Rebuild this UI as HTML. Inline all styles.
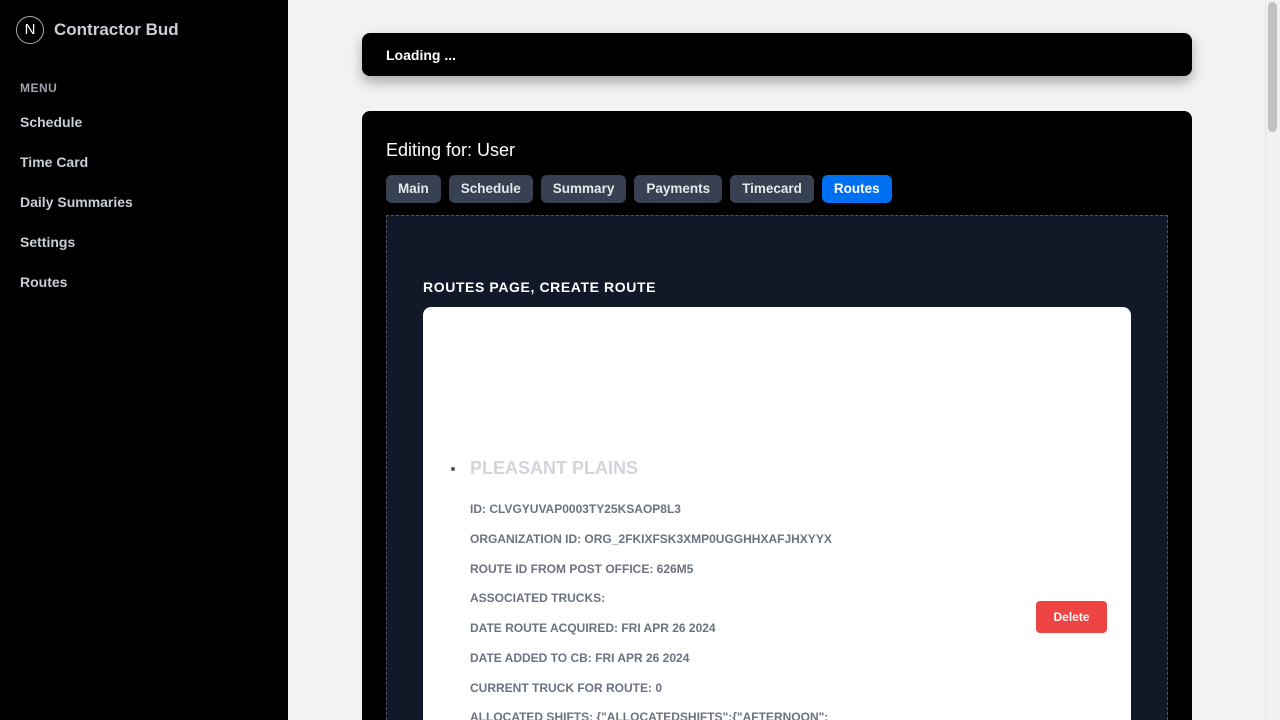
<!DOCTYPE html>
<html style="width:1280px;height:720px;overflow:hidden"><head><style>
*{margin:0;padding:0;box-sizing:border-box}
body{width:1280px;height:720px;overflow:hidden;background:#f2f2f2;font-family:"Liberation Sans","DejaVu Sans",sans-serif;position:relative}
.side{position:absolute;left:0;top:0;width:288px;height:720px;background:#000}
.logo{position:absolute;left:16px;top:16px;width:28px;height:28px;border:1px solid #aaa;border-radius:50%;color:#fff;font-size:15px;text-align:center;line-height:26px}
.brand{position:absolute;left:54px;top:20px;color:#c9cdd4;font-weight:bold;font-size:17px}
.menu{position:absolute;left:20px;top:81px;color:#9ca3af;font-weight:bold;font-size:12px;letter-spacing:.5px}
.nav{position:absolute;left:20px;color:#c9cdd4;font-weight:bold;font-size:14px}
.sb{position:absolute;right:0;top:0;width:15px;height:720px;background:#f1f1f1;border-left:1px solid #e5e5e5}
.thumb{position:absolute;right:3px;top:2px;width:9px;height:130px;background:#c1c1c1;border-radius:5px}
.load{position:absolute;left:362px;top:33px;width:830px;height:43px;background:#000;border-radius:8px;box-shadow:0 6px 12px rgba(0,0,0,.3);color:#fff;font-weight:bold;font-size:14px;padding:14px 24px}
.card{position:absolute;left:362px;top:111px;width:830px;height:609px;background:#000;border-radius:8px 8px 0 0;overflow:hidden}
.ed{position:absolute;left:24px;top:29px;color:#fff;font-size:18px}
.tabs{position:absolute;left:24px;top:64px;display:flex;gap:8px}
.tab{height:28px;padding:0 12px;background:#374151;color:#e5e7eb;font-weight:bold;font-size:13.5px;line-height:28px;border-radius:6px}
.tab.a{background:#0070f3;color:#fff}
.inner{position:absolute;left:24px;top:104px;width:782px;height:505px;background:#111827;border:1px dashed #4b5563;border-bottom:none;overflow:hidden}
.h{position:absolute;left:36px;top:63px;color:#fff;font-weight:bold;font-size:14px;letter-spacing:.6px}
.white{position:absolute;left:36px;top:91px;width:708px;height:414px;background:#fff;border-radius:8px 8px 0 0;overflow:hidden}
.dot{position:absolute;left:28px;top:160px;width:4px;height:4px;background:#555;border-radius:50%}
.t{position:absolute;left:47px;top:151px;color:#d1d5db;font-weight:bold;font-size:18px}
.it{position:absolute;left:47px;color:#6b7280;font-weight:bold;font-size:12px;white-space:nowrap}
.del{position:absolute;left:613px;top:294px;width:71px;height:32px;background:#ef4444;border-radius:4px;color:#fff;font-weight:bold;font-size:12px;text-align:center;line-height:32px}
</style></head><body>
<div class="side">
<div class="logo">N</div><div class="brand">Contractor Bud</div>
<div class="menu">MENU</div>
<div class="nav" style="top:114px">Schedule</div>
<div class="nav" style="top:154px">Time Card</div>
<div class="nav" style="top:194px">Daily Summaries</div>
<div class="nav" style="top:234px">Settings</div>
<div class="nav" style="top:274px">Routes</div>
</div>
<div class="load">Loading ...</div>
<div class="card">
<div class="ed">Editing for: User</div>
<div class="tabs"><div class="tab">Main</div><div class="tab">Schedule</div><div class="tab">Summary</div><div class="tab">Payments</div><div class="tab">Timecard</div><div class="tab a">Routes</div></div>
<div class="inner">
<div class="h">ROUTES PAGE, CREATE ROUTE</div>
<div class="white">
<div class="dot"></div>
<div class="t">PLEASANT PLAINS</div>
<div class="it" style="top:195px">ID: CLVGYUVAP0003TY25KSAOP8L3</div>
<div class="it" style="top:225px">ORGANIZATION ID: ORG_2FKIXFSK3XMP0UGGHHXAFJHXYYX</div>
<div class="it" style="top:255px">ROUTE ID FROM POST OFFICE: 626M5</div>
<div class="it" style="top:284px">ASSOCIATED TRUCKS:</div>
<div class="it" style="top:314px">DATE ROUTE ACQUIRED: FRI APR 26 2024</div>
<div class="it" style="top:344px">DATE ADDED TO CB: FRI APR 26 2024</div>
<div class="it" style="top:374px">CURRENT TRUCK FOR ROUTE: 0</div>
<div class="it" style="top:403px">ALLOCATED SHIFTS: {"ALLOCATEDSHIFTS":{"AFTERNOON":</div>
<div class="del">Delete</div>
</div>
</div>
</div>
<div class="sb"><div class="thumb"></div></div>
</body></html>
